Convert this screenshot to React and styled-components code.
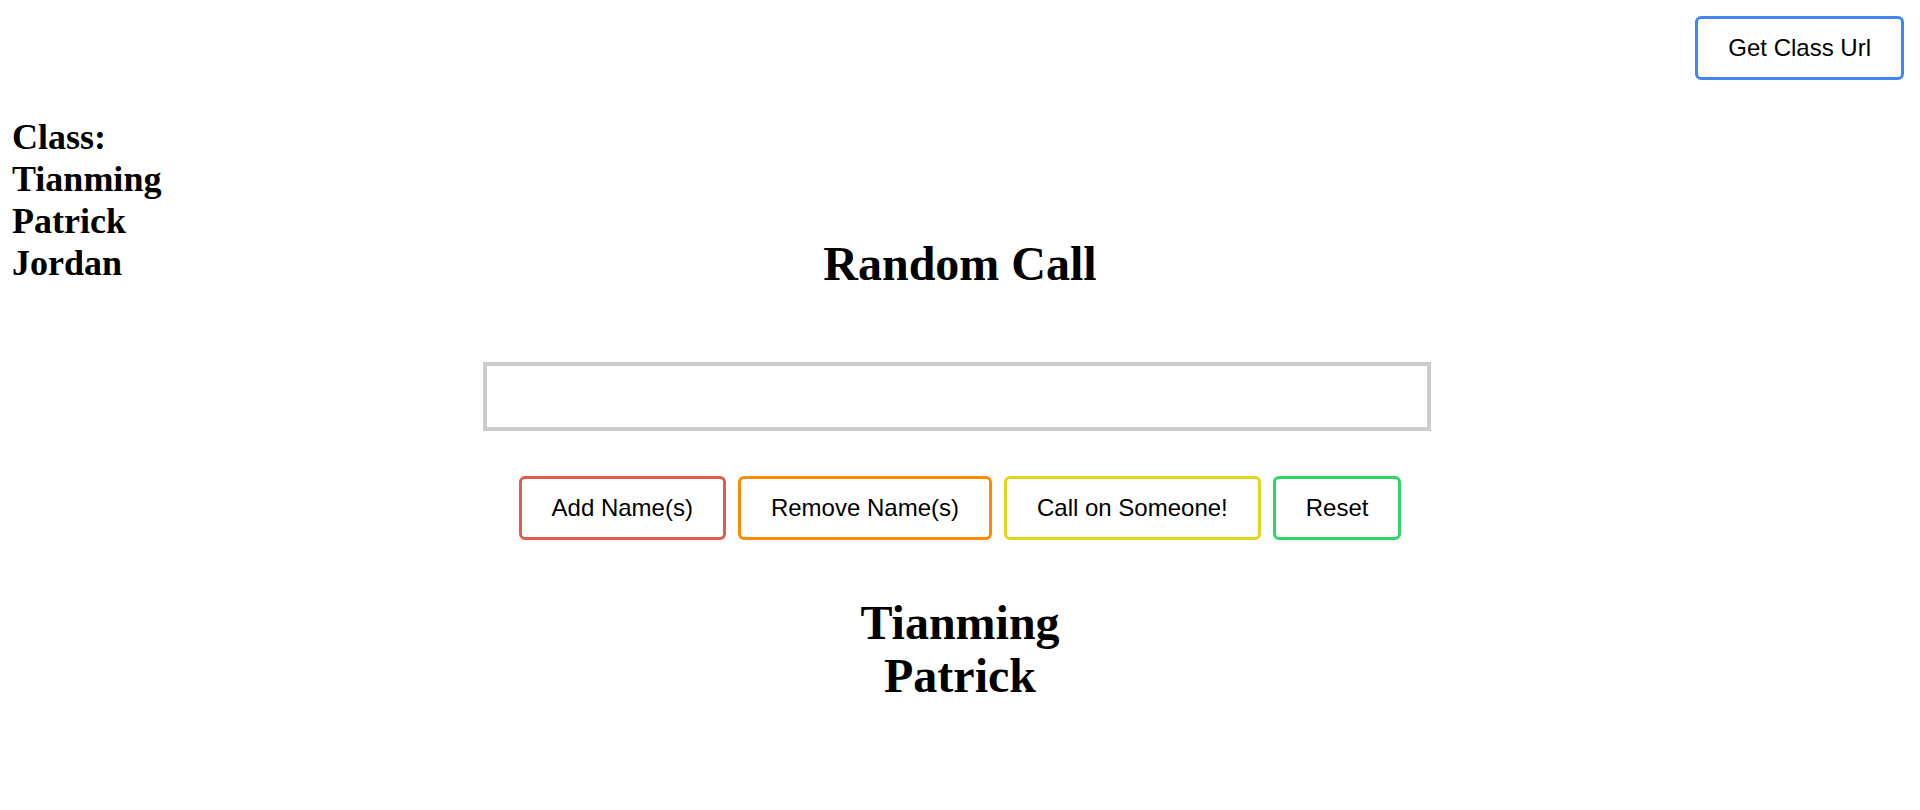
import React, { useState } from 'react';
import styled, { createGlobalStyle } from 'styled-components';

const GlobalStyle = createGlobalStyle`
  html, body {
    margin: 0;
    padding: 0;
    background: #ffffff;
  }
  body {
    font-family: "Liberation Serif", "Times New Roman", serif;
    color: #000000;
  }
`;

const ACCENTS = {
  red: '#e05b4a',
  orange: '#ff8c00',
  yellow: '#e2d31c',
  green: '#2ad767',
  blue: '#4286f2',
};

function App() {
  const [roster] = useState(['Tianming', 'Patrick', 'Jordan']);
  const [called] = useState(['Tianming', 'Patrick']);
  const [names, setNames] = useState('');

  return (
    <Page>
      <GlobalStyle />
      <Header>
        <OutlineButton accent={ACCENTS.blue}>Get Class Url</OutlineButton>
      </Header>
      <Body>
        <Roster>
          <RosterLine>Class:</RosterLine>
          {roster.map((name) => (
            <RosterLine key={name}>{name}</RosterLine>
          ))}
        </Roster>
        <Main>
          <Title>Random Call</Title>
          <NameInput value={names} onChange={(e) => setNames(e.target.value)} />
          <ButtonRow>
            <OutlineButton accent={ACCENTS.red}>Add Name(s)</OutlineButton>
            <OutlineButton accent={ACCENTS.orange}>Remove Name(s)</OutlineButton>
            <OutlineButton accent={ACCENTS.yellow}>Call on Someone!</OutlineButton>
            <OutlineButton accent={ACCENTS.green}>Reset</OutlineButton>
          </ButtonRow>
          <Results>
            {called.map((name) => (
              <ResultLine key={name}>{name}</ResultLine>
            ))}
          </Results>
        </Main>
        <div />
      </Body>
    </Page>
  );
}

const Page = styled.div`
  width: 100%;
  min-height: 810px;
`;

const Header = styled.header`
  display: flex;
  justify-content: flex-end;
  padding: 16px 16px 0;
`;

const Body = styled.div`
  display: grid;
  grid-template-columns: 1fr auto 1fr;
  align-items: start;
  padding: 0 12px;
`;

const Roster = styled.div`
  display: flex;
  flex-direction: column;
  margin-top: 36px;
`;

const RosterLine = styled.div`
  font-size: 36px;
  font-weight: bold;
  line-height: normal;
`;

const Main = styled.main`
  display: flex;
  flex-direction: column;
  align-items: center;
`;

const Title = styled.h1`
  margin: 156px 0 0;
  font-size: 48px;
  font-weight: bold;
  line-height: normal;
`;

const NameInput = styled.input`
  box-sizing: border-box;
  width: 948px;
  height: 69px;
  margin: 71px 6px 0 0;
  padding: 0 12px;
  border: 4.5px solid #cccccc;
  font-family: "Liberation Sans", Arial, sans-serif;
  font-size: 24px;
  outline: none;
`;

const ButtonRow = styled.div`
  display: flex;
  gap: 12px;
  margin-top: 45px;
`;

const OutlineButton = styled.button`
  box-sizing: border-box;
  padding: 15px 30px;
  background: #ffffff;
  border: 3px solid ${(p) => p.accent};
  border-radius: 6px;
  font-family: "Liberation Sans", Arial, sans-serif;
  font-size: 24px;
  line-height: normal;
  color: #000000;
  cursor: pointer;
`;

const Results = styled.div`
  display: flex;
  flex-direction: column;
  align-items: center;
  margin-top: 56px;
`;

const ResultLine = styled.div`
  font-size: 48px;
  font-weight: bold;
  line-height: 53px;
`;

export default App;
